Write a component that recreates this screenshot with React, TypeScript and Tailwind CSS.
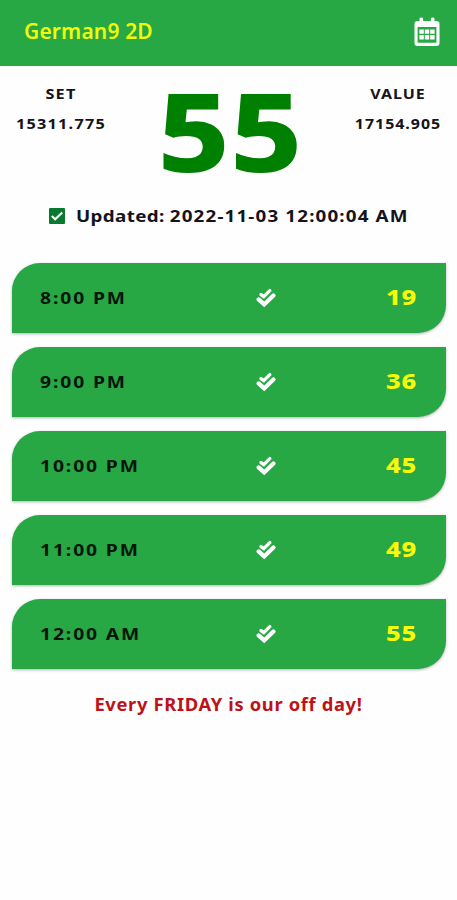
interface ResultType {
  time: string;
  value: string;
}

const results: ResultType[] = [
  { time: '8:00 PM', value: '19' },
  { time: '9:00 PM', value: '36' },
  { time: '10:00 PM', value: '45' },
  { time: '11:00 PM', value: '49' },
  { time: '12:00 AM', value: '55' },
];

function CalendarIcon() {
  return (
    <svg width="26" height="30" viewBox="0 0 26 30" fill="none">
      <path
        d="M3.5 4H5.5V1.8Q5.5.5 7.3.5T9.1 1.8V4H16.9V1.8Q16.9.5 18.7.5T20.5 1.8V4H22.5Q25.5 4 25.5 7V26Q25.5 29 22.5 29H3.5Q.5 29 .5 26V7Q.5 4 3.5 4ZM3.6 10V25.7H22.4V10Z"
        fill="white"
        fillRule="evenodd"
      />
      <path
        d="M5.4 12.4h4.4v4.4H5.4zM10.8 12.4h4.4v4.4h-4.4zM16.2 12.4h4.4v4.4h-4.4zM5.4 18h4.4v4.4H5.4zM10.8 18h4.4v4.4h-4.4zM16.2 18h4.4v4.4h-4.4z"
        fill="white"
      />
    </svg>
  );
}

function DoubleCheckIcon() {
  return (
    <svg width="20" height="20" viewBox="0 0 20 20" fill="none">
      <path
        d="M5 6.6L7.8 8.6L13.8 2.6"
        stroke="white"
        strokeWidth="3.4"
        strokeLinecap="round"
      />
      <path
        d="M2.6 11.4L8.2 16.4L17.4 7.4"
        stroke="white"
        strokeWidth="4.2"
        strokeLinecap="round"
      />
    </svg>
  );
}

function CheckBoxIcon() {
  return (
    <svg width="16" height="16" viewBox="0 0 16 16" fill="none">
      <rect width="16" height="16" rx="1" fill="#08792f" />
      <path d="M2.8 8L6.2 11.3L13.2 4.5" stroke="white" strokeWidth="2.2" />
    </svg>
  );
}

function ResultRow(props: ResultType) {
  return (
    <li className="flex h-[70px] items-center rounded-tl-[28px] rounded-br-[28px] bg-[#28a745] pr-[29px] pl-7 shadow-[0_1px_3px_rgba(0,0,0,0.3)]">
      <span className="w-[216px] origin-left scale-x-117 text-[16.5px] tracking-[1.6px] text-[#041607]">
        {props.time}
      </span>
      <DoubleCheckIcon />
      <span className="flex-1 origin-right scale-x-116 pb-[3px] text-right text-[22px] font-extrabold tracking-[0.6px] text-[#f8fb05]">
        {props.value}
      </span>
    </li>
  );
}

function App() {
  return (
    <div className="min-h-screen bg-[#fefefe] font-['Noto_Sans',sans-serif] font-bold text-[#15131b]">
      <header className="flex h-[66px] items-center justify-between bg-[#28a745] pr-[17px] pb-[3px] pl-6">
        <h1 className="text-[21px] font-semibold tracking-[0.15px] text-[#f0fb0c]">
          German9 2D
        </h1>
        <CalendarIcon />
      </header>

      <section className="flex h-[130px] justify-between px-[15px] pt-3 text-center text-[14.5px] leading-[30px]">
        <div className="w-[92px] scale-x-112 tracking-[1.1px]">
          <p>SET</p>
          <p>15311.775</p>
        </div>
        <p className="origin-center scale-x-115 text-[109px] leading-[104px] font-extrabold text-[#008000]">
          55
        </p>
        <div className="w-[88px] scale-x-110 tracking-[0.9px]">
          <p>VALUE</p>
          <p>17154.905</p>
        </div>
      </section>

      <div className="flex h-10 items-center gap-[11px] pl-[49px]">
        <CheckBoxIcon />
        <p className="origin-left scale-x-114 text-[16.5px] tracking-[1px] whitespace-nowrap">
          <span className="tracking-[0.3px]">Updated: </span>
          2022-11-03 12:00:04 AM
        </p>
      </div>

      <ul className="mt-[27px] flex flex-col gap-3.5 pr-[11px] pl-3">
        {results.map((result) => (
          <ResultRow key={result.time} {...result} />
        ))}
      </ul>

      <p className="mt-[23px] scale-x-108 text-center text-[17px] tracking-[0.6px] text-[#bd1218]">
        Every FRIDAY is our off day!
      </p>
    </div>
  );
}

export default App;
